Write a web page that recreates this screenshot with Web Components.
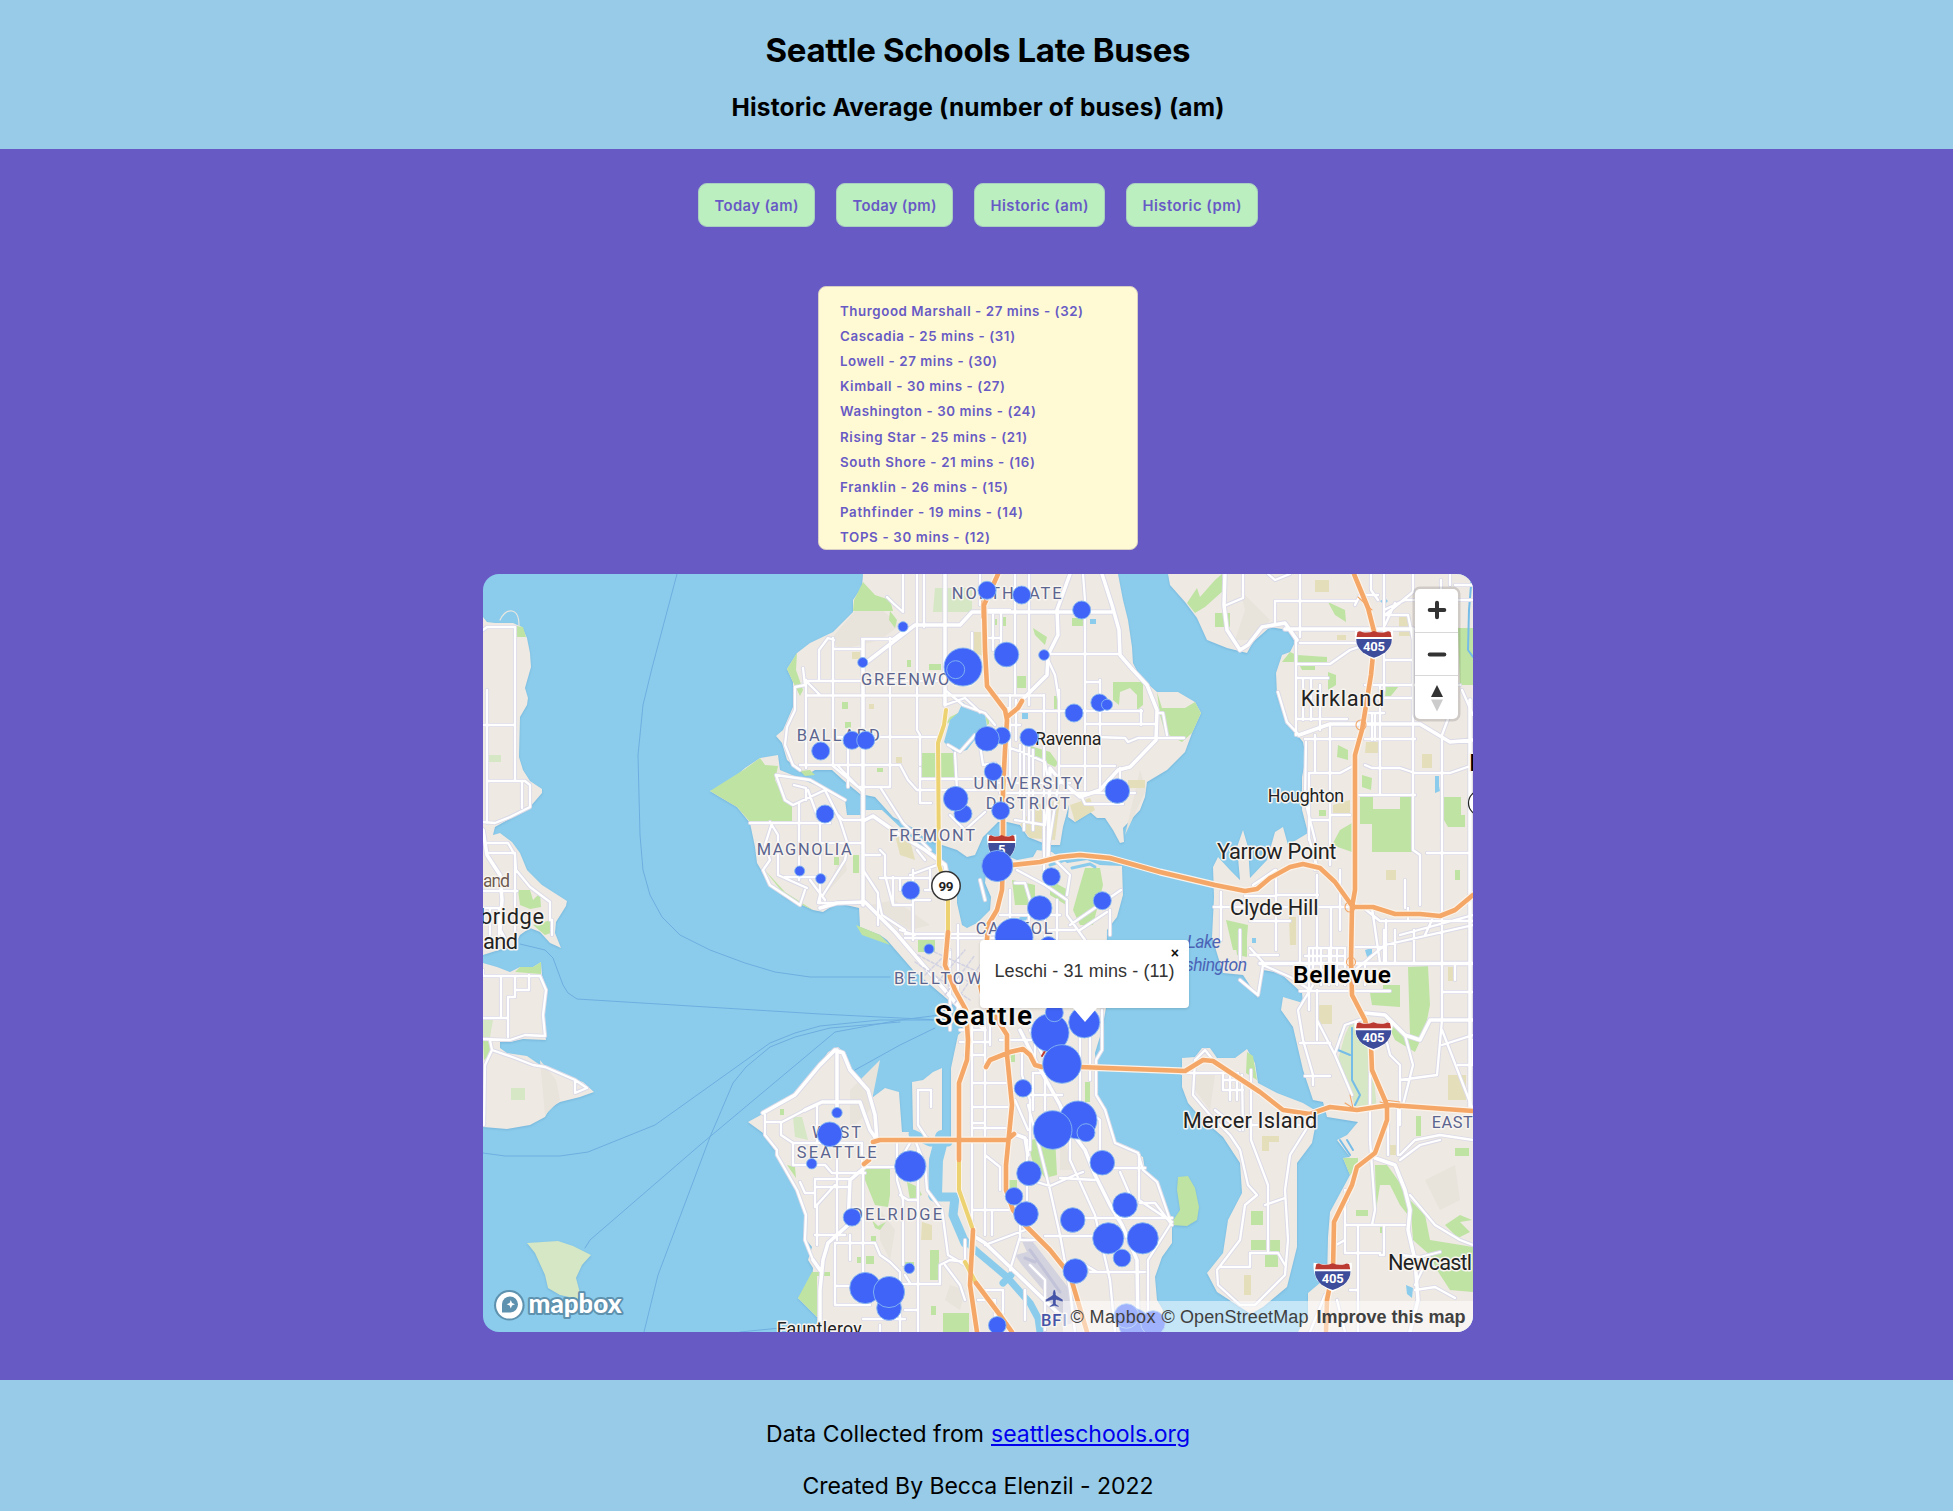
<!DOCTYPE html>
<html lang="en">
<head>
<meta charset="utf-8">
<title>Seattle Schools Late Buses</title>
<style>
body{margin:0;background:#685ac5;font-family:Inter,"Liberation Sans",sans-serif;color:#000}
</style>
</head>
<body>
<late-buses-app></late-buses-app>
<script>
const define=(name,html,init)=>{
  const t=document.createElement('template');t.innerHTML=html;
  customElements.define(name,class extends HTMLElement{
    constructor(){super();this.attachShadow({mode:'open'}).appendChild(t.content.cloneNode(true));}
    connectedCallback(){if(init)init.call(this,this.shadowRoot);}
  });
};

/* One line of text tracked out to the width given in its attribute. */
define('fit-line',`<style>:host{display:inline-block;white-space:nowrap}</style><span><slot></slot></span>`,function(r){
  const s=r.querySelector('span'),w=+this.getAttribute('width'),n=this.textContent.length;
  s.style.letterSpacing='0px';
  const ls=(w-s.getBoundingClientRect().width)/(n-1);
  s.style.letterSpacing=ls+'px';s.style.marginRight=-ls+'px';
});

define('page-header',`<style>
:host{display:flex;flex-direction:column;align-items:center;height:149px;background:#97cbe8;box-sizing:border-box;padding:30px 0 0 3px}
h1{margin:0;font:700 33px/40px Inter,sans-serif}h2{margin:22px 0 0;font:700 24.5px/30px Inter,sans-serif}
</style><h1><fit-line width="425">Seattle Schools Late Buses</fit-line></h1>
<h2><fit-line width="493">Historic Average (number of buses) (am)</fit-line></h2>`);

define('pill-button',`<style>
:host{display:block}
button{display:flex;align-items:center;justify-content:center;width:var(--w);height:44px;padding:2px 0 0;box-sizing:border-box;border:1px solid #a9cfc0;border-radius:9px;background:#bbefc0;color:#685ac5;font:600 14.8px/18px Inter,sans-serif}
</style><button><slot></slot></button>`);

define('view-switch',`<style>:host{display:flex;justify-content:center;gap:21px;padding-top:34px}</style>
<pill-button style="--w:117px"><fit-line width="84">Today (am)</fit-line></pill-button>
<pill-button style="--w:117px"><fit-line width="84">Today (pm)</fit-line></pill-button>
<pill-button style="--w:131px"><fit-line width="98">Historic (am)</fit-line></pill-button>
<pill-button style="--w:132px"><fit-line width="99">Historic (pm)</fit-line></pill-button>`);

define('school-list',`<style>
:host{display:block;width:320px;height:264px;margin:59px auto 0;box-sizing:border-box;padding:11.7px 0 0 21px;border:1px solid #d8cfc4;border-radius:8px;background:#fffad3;overflow:hidden;color:#685ac5;font:600 13.3px/25.2px Inter,sans-serif}
ul{margin:0;padding:0;list-style:none}li{height:25.2px}
</style><ul></ul>`,function(r){
  const rows=[['Thurgood Marshall - 27 mins - (32)',243],['Cascadia - 25 mins - (31)',175],['Lowell - 27 mins - (30)',157],['Kimball - 30 mins - (27)',165],['Washington - 30 mins - (24)',196],['Rising Star - 25 mins - (21)',187],['South Shore - 21 mins - (16)',195],['Franklin - 26 mins - (15)',168],['Pathfinder - 19 mins - (14)',183],['TOPS - 30 mins - (12)',150]];
  r.querySelector('ul').innerHTML=rows.map(([t,w])=>`<li><fit-line width="${w}">${t}</fit-line></li>`).join('');
});

define('map-canvas',`<style>
:host{display:block}svg{display:block}
.land{fill:#eee9e3}.water{fill:#8bccec}.g{fill:#bfe3a3}.lg{fill:#d5e7c4}.y{fill:#e4dfba}.sh{fill:#e4dfd6}
.lab{font-family:"Roboto","Open Sans",sans-serif;fill:#222;stroke:#f7f4f0;stroke-width:3;paint-order:stroke;stroke-linejoin:round}
.hood{fill:#5b648f;font-size:16.4px}.t{font-size:17.8px}.c{font-size:21.8px}.lake{fill:#4b64b6;stroke:none;font-style:italic;font-size:17.5px}
.dot circle{fill:#4064f7;stroke:#84b7f1;stroke-width:.9}
path{fill:none;stroke-linejoin:round;stroke-linecap:round}
path.land,path.water,path.g,path.lg,path.y,path.sh{stroke:none}
path.land{fill:#eee9e3}path.water{fill:#8bccec}path.g{fill:#bfe3a3}path.lg{fill:#d5e7c4}path.y{fill:#e4dfba}path.sh{fill:#e8e3db}
</style>
<svg width="990" height="758" viewBox="483 574 990 758">
<defs>
<path id="minor" d="M903,574V612L893,603L887,597M917,574V730L920,735V765M924,574V627M890,638V765M833,638V765M819,680V650L828,638L834,640M806,680V768M848,745V787M834,649H862M806,681H945M806,695.5H1043M834,737H940M800,765H900M862,639H893L905,630M803,668L805,685L795,687L795,710L787,727L785,745L793,765L800,770M806,681L820,695M900,765L908,780L917,790H1000M920,768V803H931M920,779H995M833,766L858,787H890V765M838,766L863,792M880,787L903,823L930,850M980,574V605M972,633V655L964,650M1015,574V695M1029,574V705M1001,610V660M993,615V650M1044,695V870M1059,690V770M1083,574L1085,600V790M1100,680V790M1085,682H1100M1141,710V725M1010,711H1142M1085,724H1157M1095,737L1125,738L1128,742L1138,738H1184M1048,654H1120M985,610H1010M985,638H1000M1048,660L1055,675L1059,700V780L1048,850M1060,766H1115M1120,768V780M1080,793H1135M1080,793L1085,804H1123M1020,745V800M1024,745V830M1029,745V820M1033,750V830M1010,695V780M1007,747L1022,752L1045,762L1050,790L1045,825L1015,820M955,753L957,790M980,745L983,765L995,763M950,790H1000M950,815L965,830L985,812M990,783H1070M1000,793H1080M945,690L963,705L985,713L995,725M945,705L965,698L980,712M1157,713H1163L1167,735M975,735L960,752L948,745M1005,725H1020M1008,708V745M1016,700V740M765,845L770,860L763,870L770,885L800,905L805,890M772,823L765,845M750,823H830M770,822L778,835V875L807,888M799,803V880M820,823V903M820,843H863M776,775L810,780L845,800M776,775L785,800L793,805L825,790L840,820L848,845L845,860L823,895M785,877H825M808,790L818,818L828,815M810,880L825,900M794,785L806,788V800M838,815L843,820H865M820,895L818,903L837,903M913,870V940M880,878H930M880,850L885,855V875L893,905H913M893,877V905M910,875L937,865M878,897L882,915L905,930M905,934H1000M905,938H1000M863,870L878,893V925M865,855H880M900,930L915,935M930,870V890M925,890H945M980,880L985,900M1015,883L1025,883L1030,900L1028,940M1017,870L1045,885L1067,900V915L1085,940M1055,860L1070,875L1067,895M1110,910V935M1070,925L1121,890M1010,890V940M1057,900V940M1080,930L1107,912M1045,905V940M1000,915H1060M1004,930H1075M917,850L925,860M913,900H930M900,878V890M950,950V1030M958,925V1010M1040,1020V1040M972,1020V1235M985,1020V1235M960,1042H990M965,1055H985M972,1083H1010M972,1107H1010M972,1123H985M972,1128H1008M972,1210H1010M985,1155L1000,1167V1190M1022,1050V1075L1030,1100V1150M1030,1030L1050,1070M1030,1095H1062M1035,1073H1060M1033,1073V1110M1045,1073V1110M1028,1105L1040,1150L1050,1190L1060,1235L1070,1290L1075,1332M1070,1130V1160L1095,1215L1110,1280L1115,1332M1030,1180L1050,1186L1075,1175L1083,1172M1060,1178L1095,1180M1110,1168H1145M1139,1155V1200L1172,1222L1148,1260V1332M1085,1218H1172M1102,1010V1050L1096,1060V1095L1105,1110L1115,1143L1138,1153L1143,1170L1157,1182L1170,1220M1045,1236H1115M1090,1272H1145M1080,1262L1097,1272M1080,1030V1105L1100,1120V1155M1090,1020V1080M1070,1110H1080M1027,1140V1200M1015,1100L1028,1130M1140,1203H1155L1172,1225M1120,1172L1130,1195M985,1245L1025,1230M1020,1237L1010,1270M992,1210V1235M1020,1215V1240L1040,1240M965,1265V1240M985,1290H1003V1313M978,1300H995V1332M1025,1290V1320M1030,1265L1045,1280V1330M960,1030H985M990,1020V1045M1000,1040H1035V1060M765,1115V1135L777,1150V1155L797,1190L806,1215L805,1240L813,1260L820,1270M767,1122H782L805,1110M781,1123V1135L793,1143H862V1165M817,1105V1143M793,1143V1165H825L832,1173H865M837,1150V1240M815,1179H850M815,1187H850M815,1180V1207L835,1185M800,1182L805,1193H815M815,1235H845M835,1243H875L880,1255L890,1262L900,1272V1332M863,1165V1300M918,1150V1310M897,1143V1180L903,1200V1265M835,1243V1305M915,1140L925,1165L927,1190L942,1210L948,1255L965,1265M835,1286H862M835,1305H870M900,1284H940V1265L950,1260L965,1262M863,1319H905M900,1195L908,1200H918M900,1160L910,1143M920,1090H931V1107M918,1090V1125L928,1140M817,1205V1245M850,1235V1260M863,1167H900M945,1265L960,1285L965,1300M905,1275L910,1283M905,1310H918V1332M880,1325V1332M1224,606L1243,598V574M1275,625V601H1355M1268,574L1275,580L1290,574M1300,574V637M1300,643H1360M1297,664H1330L1350,650L1365,645M1296,640V735M1296,678H1328M1303,678V720M1311,678V720M1320,685V700M1296,719H1347M1320,690V730M1278,692L1287,722L1299,735M1306,742L1305,800L1315,840V870M1309,838L1318,870M1315,735V773M1330,724V865M1309,840V773H1340L1355,765M1305,739H1355M1330,815H1350M1310,820H1330M1365,765L1372,768H1400L1415,773L1450,773L1473,765M1413,630V850L1420,855V905M1384,574V690M1384,615H1408L1413,640M1384,610L1405,600H1473M1413,574V592L1385,615M1385,625L1395,603M1365,685H1460M1365,698H1413M1380,685V740M1380,740V795M1365,739H1415M1358,795H1415M1442,735V990M1450,574V585M1441,580V600M1427,853H1470M1405,880V908M1462,690L1473,715M1360,905L1380,921H1473M1214,907H1350M1221,892V940M1276,870V950M1317,875V963M1331,908V963M1250,921H1290M1253,885L1275,870M1245,896H1275M1276,895H1318M1300,907V963M1386,920V963M1372,908L1380,963M1408,908V921M1340,870V930M1355,947H1386M1400,935L1473,915M1425,935L1432,920M1371,574V590L1378,600M1355,605L1360,595H1378M1375,713V740M1368,713H1384M1372,713V740M1384,660H1413M1473,585H1455M1455,685V700L1442,735M1240,980L1258,995L1263,965L1290,977L1310,990M1250,948L1263,962M1250,955H1278M1240,930V960M1309,948V1010M1313,948V985M1321,948V985M1329,948V985M1337,948V985M1345,948V985M1309,948H1345M1305,956H1345M1300,991H1390M1309,970H1345M1295,980H1345M1313,985L1298,1010L1303,1040L1313,1075V1085M1300,1043H1330M1305,1076H1330M1317,990V1040M1317,1020L1335,1055L1352,1095M1335,1053L1345,1025L1365,1018M1365,985V963M1395,930V963M1384,930V963M1414,930V963M1442,950V1020L1437,1075L1400,1080V1105M1442,1030L1473,1110M1385,1035L1390,1055L1400,1065V1125M1405,1035L1413,1065L1403,1105M1455,963V980M1442,992H1473M1355,970L1385,945L1473,925M1442,1045L1473,1035M1458,1065H1473V1040M1370,1055V1140L1375,1210L1372,1225M1388,1105V1155M1398,1105V1155M1400,1155L1415,1140L1440,1135L1473,1140M1400,1160L1420,1145L1440,1140M1410,1195L1435,1225L1460,1240L1473,1245M1345,1225H1405M1345,1200V1253H1380M1358,1225V1290H1350M1384,1225V1255L1380,1255M1400,1255L1420,1257L1440,1252M1415,1290L1435,1287L1455,1298M1336,1245L1345,1240M1340,1210L1348,1200L1345,1190M1310,1332L1325,1295M1345,1332L1337,1300M1358,1290V1332M1427,1260L1415,1285M1195,1060L1193,1095L1210,1115L1230,1135L1240,1150L1248,1185L1257,1195L1245,1205L1240,1240L1217,1270L1218,1285L1240,1305L1255,1305L1285,1275L1288,1240L1285,1190L1290,1155L1312,1120M1182,1073H1238M1242,1075L1243,1130M1251,1070V1140L1268,1185V1252M1220,1267H1250V1253H1278L1285,1265M1223,1075V1090H1243M1230,1075V1100M1237,1075V1100M1223,1080H1243M1265,1205L1285,1198M1195,1060L1205,1050L1217,1065M1223,1125H1310M1240,1130L1215,1110M483,630L487,627H515V780M487,690V823M483,725H515M487,781H525L530,785V807L510,817L495,823L483,822M522,781V808M487,843H508L515,855L516,870L530,887L550,902V920H552V935M487,853H515V945M483,891H517M483,970V976H540L546,990L543,1015L545,1036L525,1035L510,1040L483,1039M501,976V1018M483,1018H508M515,976V997H508V1037M529,975V990H515M490,1040L492,1050L515,1058L533,1065L545,1067L575,1080V1093L587,1088L575,1080M492,1050L485,1065L484,1125M483,908H500M490,908V935M499,908V935"/>
<path id="major" d="M945,574V705M863,640V905M863,665L915,625H960L972,612H1113M1070,574L1057,610L1058,635L1048,655L1047,675L1020,702M1102,574L1112,605L1119,630L1120,655L1133,670L1147,685L1157,710L1156,740L1130,767L1118,770L1100,790L1080,797L1060,780L1050,768L1048,860M865,820L873,816L900,835L925,850L945,865L950,890M820,908L837,903L865,902L895,932L960,1008L985,1030M1020,1030L1035,1060L1060,1105L1070,1130L1085,1150L1095,1175L1110,1205L1122,1225L1137,1260L1138,1332M985,1243L1060,1315M972,1235L985,1243M1014,1134L1025,1138L1028,1155M763,1113L795,1095L820,1065L835,1050L843,1053L850,1070L868,1090L875,1115L877,1140M837,1050V1115M805,1110L822,1102H860L870,1130L877,1140M865,1167L850,1180L848,1225L828,1243L823,1260L820,1290V1332M813,1260L820,1270M1225,574L1224,605L1227,630L1240,650L1248,645L1262,627L1285,623L1297,640M1285,629H1413M1299,735L1330,724H1420L1450,742L1473,740M1470,700V963M1260,963.5H1473M1470,963V1110M1365,1013L1385,1015L1405,1035L1420,1040L1430,1020H1473M1375,1158L1395,1165L1405,1190L1410,1210L1408,1230L1415,1260L1418,1300L1410,1332M483,830L487,855L500,875L502,900L500,930L508,945"/>
<path id="hwy" d="M998,574L990,592L984,605L985,650L987,686L1005,710L1007,720L1005,750L1003,790V860L1002,890L997,910L988,925L987,940M980,985L985,1005L993,1013L1007,1035V1055L1012,1105L1006,1165V1190L1013,1210L1025,1225L1050,1250L1070,1275L1087,1332M1007,717L1018,708L1022,701M1003,866L1040,862L1060,857L1080,855L1110,858L1160,872L1215,885L1245,891L1257,889L1270,878L1290,867L1303,864L1320,868L1335,882L1350,903L1353,907H1373L1395,914H1420L1440,916L1455,910L1473,895M1354,574L1368,608L1375,635L1371,675L1362,730L1355,755V890L1352,907L1351,960L1352,995L1365,1020L1371,1045L1372,1070L1387,1105V1120L1375,1153L1357,1167L1352,1185L1334,1222L1333,1270L1327,1300L1326,1332M986,1067L990,1060L1010,1052L1023,1049L1030,1055L1035,1065L1042,1067H1080L1185,1071L1203,1060L1213,1061L1260,1092L1283,1110L1310,1114L1330,1107L1357,1110L1390,1105L1473,1111M948,932L945,965L955,990L966,1010L968,1040L967,1060L959,1083V1160M973,1230L970,1285L977,1332M976,1283L1000,1315L1012,1332M864,1164L869,1160M873,1142L880,1140H1007L1014,1134"/>
<path id="yel" d="M946,710L944,725L938,743L939,865L948,895V930M959,1160V1190L972,1227M965,1262L976,1283"/>
<g id="shield"><path d="M-19,-14Q0,-10 19,-14Q20,-6 16,3Q10,11 0,15Q-10,11-16,3Q-20,-6-19,-14Z" style="fill:#fff"/><path d="M-16.5,-12.5Q-14,-14-12,-12.5Q-6,-11 0,-13.5Q6,-11 12,-12.5Q14,-14 16.5,-12.5L17.5,-7.5H-17.5Z" style="fill:#bb3a32"/><path d="M-17.8,-5.5H17.8Q18,2 11,8Q5,12 0,13.2Q-5,12-11,8Q-18,2-17.8,-5.5Z" style="fill:#3e4c9c"/></g>
</defs>
<rect x="483" y="574" width="990" height="758" class="water"/>
<g style="filter:drop-shadow(0 1px 1px rgba(80,140,190,.35))">
<path class="land" d="M483,617L487,622L495,623L513,623L522,627L527,638L530,653L531,667L525,688L528,698L527,705L520,717L519,757L523,770L530,781L542,789V793L530,807L513,817L495,827L493,835L500,833L512,842L520,853L527,870L542,885L567,901L566,906L556,922L555,933L561,948L550,943L540,932L530,928L520,935L515,945L483,955Z"/>
<path class="land" d="M483,963L497,967L510,972L520,967L533,967L541,962L542,975L547,990L543,1017L546,1040L523,1039L510,1042L500,1042V1048L507,1053L527,1056L543,1067L563,1076L583,1082L594,1092L580,1097L560,1102L550,1108L545,1117L530,1125L507,1129L483,1127Z"/>
<path class="lg" d="M527,1243L558,1241L573,1246L591,1255L582,1265L576,1278L580,1293L578,1299L560,1295L548,1288L545,1275L535,1253Z"/>
<path class="land" d="M863,574L862,587L853,600V612L833,632L810,643L797,653L787,669L793,682V707L783,730L776,736L782,743L787,760L800,771L807,775L815,770H832L843,780L860,794L875,797L893,817L913,828L927,840L957,850L967,857L975,855L983,837L998,822L1007,822L1020,825L1028,837L1048,845H1060L1063,827L1069,805L1068,817L1075,822L1090,812L1097,818H1105L1113,830L1120,843L1124,842L1123,828L1140,810L1145,797L1147,782L1167,770L1185,752L1192,733L1201,713L1195,702L1178,692H1157L1140,677L1133,663L1132,647L1128,620L1123,600L1118,574Z"/>
<path class="land" d="M710,791L728,783L745,768L760,758L778,755L780,770L797,777L820,787L845,800L847,815H865V810H882L900,827L920,845L940,857L948,870L957,890V903L962,925L967,928L977,923L990,910L991,897L985,883L987,863L993,850L1017,860L1033,857L1037,850L1052,852L1067,863L1087,860L1100,865L1122,866L1123,895L1117,917L1107,930L1106,1008L1102,1030L1095,1053L1097,1077L1095,1095L1103,1107L1115,1143L1127,1146L1135,1153L1143,1157L1145,1170L1157,1183L1172,1220V1243L1162,1257L1155,1277L1157,1300L1163,1310L1160,1332H818L817,1317L798,1298L812,1280L813,1268L808,1260L812,1247L804,1237L807,1213L795,1187L787,1173L777,1153L763,1133L748,1122L770,1110L795,1095L815,1072L828,1052L838,1047L845,1053L850,1068L868,1087L873,1097L885,1088L899,1092L902,1132H913L912,1082L923,1080L933,1072L942,1068V1137H951V1068L958,1035L963,1030L960,1010L940,993L913,970L887,940L880,935L860,927L859,908L837,903L823,912L813,910L787,898L767,880L757,863L755,847L750,823L737,807L720,797Z"/>
<path class="land" d="M1168,574L1170,585L1185,602L1197,618L1207,640L1227,648L1247,653L1253,642L1270,627L1288,630L1295,642L1290,652L1282,655L1276,673L1277,695L1287,723L1303,742L1306,757L1302,777V810L1308,833L1288,845L1283,827L1275,832L1267,860L1250,878L1248,847L1243,830L1237,847L1240,880L1230,870L1218,857L1213,867L1214,897L1212,937L1223,973L1243,975L1258,998L1263,970L1280,973L1302,993L1303,1003L1283,997L1281,1010L1293,1027L1303,1070L1313,1100L1323,1102L1327,1117L1358,1122L1347,1135L1337,1140L1350,1157L1343,1158L1350,1175L1330,1212L1328,1237L1327,1277L1308,1293V1313L1298,1332H1473V574Z"/>
<path class="land" d="M1182,1058L1195,1057L1202,1048H1210L1217,1058H1235L1247,1049L1255,1063L1258,1083L1277,1093L1303,1103L1318,1112L1312,1143L1297,1163V1247L1287,1287L1263,1307L1251,1314L1240,1307L1217,1292L1207,1273L1223,1253L1228,1220L1242,1193L1240,1163L1223,1137L1200,1117L1188,1103L1182,1087Z"/>
<path class="g" d="M1178,1177L1188,1176L1195,1188L1199,1207L1197,1220L1187,1226L1170,1225L1180,1210L1177,1190Z"/>
</g>
<path class="sh" d="M867,597L900,625L880,640L840,650L830,640ZM880,1060L850,1090L850,1130L870,1110ZM540,1060L556,1080L560,1100L545,1115ZM1240,590L1270,620L1255,640L1235,640L1245,610ZM870,905L895,900L930,925L910,930ZM950,1285L965,1290L960,1310L945,1300ZM1195,1070L1215,1075L1210,1110L1195,1090ZM1425,1180L1455,1165L1460,1200L1440,1210ZM1140,770L1146,790L1125,835ZM880,1210L895,1230L890,1260L880,1240ZM843,850L847,870L825,895ZM1060,1130L1075,1170L1060,1170Z"/>
<path class="g" d="M710,791L745,769L760,758L765,765L778,766L775,780L785,800L792,805V821L750,822L737,807L720,797ZM863,582L875,595L890,600L893,611H853L854,600ZM890,611L897,620L895,628L889,620ZM797,653L787,669L793,682L800,696L803,690L796,670ZM922,753H956L957,778H921ZM1157,692L1162,708H1185L1195,702L1201,713L1192,733L1182,742L1165,733L1160,715ZM1113,682H1143V705L1137,710V695L1130,688L1120,692L1119,705L1113,700ZM1085,868L1100,868L1103,885L1093,925H1080L1073,910L1080,885ZM1050,880L1068,890L1066,905L1050,895ZM1027,745L1050,752L1058,763L1055,767L1030,755ZM1360,797H1373V809H1400V797H1413L1412,852H1372V824H1360ZM1444,797H1461V815H1465V827H1448L1444,820ZM1458,628H1473V685H1460ZM1282,662L1290,652L1297,655L1327,657V662ZM1300,666H1315V670H1302ZM1328,602L1345,610L1346,622L1335,615ZM1215,613H1230V627H1215ZM1187,603L1197,588L1200,597L1215,580L1222,574L1224,590L1205,607L1195,613ZM1408,967L1428,966L1430,1005L1425,1030L1415,1052L1395,1040L1388,1025L1410,1035ZM1383,985H1400V1007L1372,1005L1370,993L1383,992ZM1234,930H1247V957L1237,955ZM1226,920L1248,925L1246,950H1233ZM1410,1200L1425,1215L1430,1240L1473,1247V1292L1450,1290L1437,1270L1430,1255L1413,1240ZM1375,1165L1387,1165L1405,1190L1408,1215L1400,1205L1390,1185L1380,1185L1376,1210ZM1343,1158H1358V1168L1350,1175ZM1251,1211H1263V1225H1251ZM1251,1240H1280V1252H1268V1250H1251ZM1265,1255H1278V1267H1265ZM1247,1052L1253,1056L1257,1080L1246,1073ZM865,1168H890V1195L888,1207L875,1205L865,1180ZM907,1182L918,1187L922,1195L910,1200ZM812,1272H817V1317L798,1298ZM930,1250H939V1280H930ZM943,1313H969V1332H943ZM787,1165L795,1167L796,1178ZM1028,1140L1055,1137L1057,1175L1045,1178L1032,1160ZM517,626L523,627L526,637H517ZM518,890H530L533,900L540,893L541,907L530,909L520,905ZM533,925L551,920V933L545,935ZM520,967L533,967L541,962V974L515,972ZM483,1040L490,1040V1055L484,1060ZM842,702h6v7h-6ZM907,660h4v7h-4ZM929,664h12v6h-12ZM845,722h6v6h-6ZM877,768h6v4h-6ZM1017,676h9v12h-9ZM1072,618h12v8h-12ZM1054,696h7v14h-7ZM1338,745L1348,750V760L1337,757ZM1362,775L1372,778L1371,790L1362,787ZM1328,672L1336,675V685L1328,690ZM1319,810h7v6h-7ZM1340,830L1352,823V852L1332,845ZM1455,870h5v10h-5ZM1386,687L1399,686L1390,697H1385ZM1455,1148h14v8h-14ZM1416,1116h5v20h-5ZM853,855h6v18h-6ZM834,857h5v8h-5ZM918,937h17v15h-17ZM1012,880L1035,885V905H1015ZM856,925L880,935L905,960L890,945L862,935ZM763,868L787,898L813,910L785,892ZM1009,1180h8v15h-8ZM1085,1082h5v20h-5ZM872,1220L878,1226L886,1222L880,1230L875,1228ZM871,1236h5v7h-5ZM857,1257h5v6h-5ZM866,1256h8v8h-8ZM902,1262h12v5h-12ZM812,1272h18v4h-18ZM931,1306h5v9h-5ZM1008,1050h7v12h-7ZM780,1109h4v6h-4ZM1000,617h6v9h-6ZM993,619h4v6h-4ZM1033,628L1047,637L1045,645L1035,635ZM960,712L950,717L945,725L950,722ZM985,714l4,0v10l-2,1ZM800,771L810,770L815,775L805,776ZM1356,1210h12v6h-12ZM1380,1227h5v6h-5ZM1445,1225L1460,1215L1472,1220L1460,1222L1470,1232L1458,1238Z"/>
<path class="lg" d="M1352,1020L1370,1035L1373,1070L1377,1110H1355L1352,1095L1338,1060L1345,1035ZM793,1117H802L808,1140L795,1137ZM511,1088H525V1100H511ZM483,1020H493L490,1037H483ZM489,755H501V762H489ZM935,588H972V612H933Z"/>
<path class="y" d="M973,632L985,632V657L973,652ZM1035,805L1060,800L1055,840L1030,838L1020,825ZM1070,805L1090,798L1095,810L1075,822ZM1315,580H1329V592H1315ZM1399,617H1411V636H1399ZM1366,742H1378V753H1365ZM1422,754H1432V768H1422ZM1319,1005H1332V1024H1319ZM1448,1075H1466V1100H1448ZM1262,1136H1279V1142H1269V1151H1262ZM895,835L910,840L915,860L900,855ZM1289,917H1296V945H1290ZM1333,805L1350,800V815H1333ZM1244,1275H1251V1295H1244ZM1390,1145H1398V1155H1390ZM1128,780H1145V788H1128ZM1337,635h9v5h-9ZM1386,870h10v10h-10ZM852,652h8v7h-8ZM896,757h6v6h-6ZM869,704h5v5h-5ZM922,1222L932,1225V1240H921ZM1448,967h9v14h-9Z"/>
<path class="water" d="M963,702L972,710L985,714L987,727L977,737L967,750L955,753L944,742L950,720L958,713ZM1022,711h6v8h-6ZM1090,619h6v5h-6ZM1380,601l5,-3l3,3l-4,4ZM1020,915l8,0l-2,6h-7ZM1365,950l7,-2v6l-5,3ZM1406,1285l7,3l-1,10l-5,-4ZM1435,776h4v10l1,5l-5,2ZM1252,938h4v5h-4Z"/>
<path d="M1050,865L1065,860M1072,868L1090,864L1095,867" stroke="#8bccec" stroke-width="3"/>
<path d="M1472,574L1469,610L1468,650L1473,657M1345,1027L1340,1035L1338,1050L1350,1055M1352,1028V1080L1360,1095L1355,1105M1340,1140L1350,1155M1347,1140L1353,1150" stroke="#75bce8" stroke-width="2"/>
<path d="M942,1137L936,1160L935,1195" stroke="#8bccec" stroke-width="14"/><path d="M913,1134L930,1142H948M937,1197L955,1197L953,1215L965,1243" stroke="#8bccec" stroke-width="9"/>
<path d="M965,1240L975,1250L1007,1277L1030,1303L1038,1318L1040,1332M1003,1283L1011,1275" stroke="#8bccec" stroke-width="7"/>
<path d="M1020,1237L1030,1238L1070,1290L1085,1320L1065,1325L1043,1290L1022,1265L1015,1255L1027,1252Z" style="fill:#d3d2df"/>
<path d="M1030,1250L1060,1292M1025,1258L1035,1262" stroke="#c2c2d8" stroke-width="3"/>
<path d="M500,620Q505,610 512,611T519,626" stroke="#e8e6df" stroke-width="1.2"/>
<path d="M677,574L652,668L643,705L638,755L640,835L643,870L650,895L662,917L680,935L710,950L745,963L775,972L810,977H890M520,944L545,950L553,958L563,985L568,993L577,999L820,1014L940,1020M483,1153L505,1156H560L588,1152L655,1125L770,1043L795,1033L820,1026L880,1020H940M644,1332L658,1275L710,1137L733,1083L746,1067L770,1047L795,1037L830,1028L900,1022M585,1248L590,1240L700,1145L835,1032L900,1020L940,1015M855,1070L900,1045L935,1028M740,1332L780,1328" stroke="#6daee0" stroke-width="1"/>
<use href="#minor" stroke="#dbdae7" stroke-width="4.2"/><use href="#major" stroke="#dbdae7" stroke-width="5.4"/>
<use href="#minor" stroke="#fff" stroke-width="2.3"/><use href="#major" stroke="#fff" stroke-width="3.5"/>
<path d="M918,955L975,985M915,962L970,1000M930,950L985,975M925,975L950,950M935,985L965,950M945,995L975,955M955,1003L980,965" stroke="#d2d2e3" stroke-width="1.5" stroke-dasharray="3 2"/>
<use href="#hwy" stroke="#fbf3ea" stroke-width="7"/><use href="#yel" stroke="#fbf3ea" stroke-width="6"/>
<use href="#yel" stroke="#edd272" stroke-width="4"/><use href="#hwy" stroke="#f4a767" stroke-width="4.6"/>
<g stroke="#f4a767" stroke-width="1.1"><circle cx="1361" cy="725" r="5" fill="none"/><circle cx="1350" cy="907" r="5" fill="none"/><circle cx="1351" cy="962" r="4.5" fill="none"/><path d="M1358,597L1372,610M1380,1102L1400,1108M1350,1095L1353,1108L1345,1103M1385,1100L1400,1102M982,600V618"/></g>
<g class="lab hood">
<text x="951.7" y="599" textLength="110">NORTHGATE</text><text x="861" y="685" textLength="114">GREENWOOD</text><text x="796.7" y="740.7" textLength="83">BALLARD</text><text x="756.7" y="855" textLength="95">MAGNOLIA</text><text x="889" y="840.7" textLength="86">FREMONT</text><text x="973.5" y="789.2" textLength="109">UNIVERSITY</text><text x="985.7" y="809" textLength="84">DISTRICT</text><text x="975.7" y="933.5" textLength="77">CAPITOL</text><text x="894" y="984.3" textLength="102">BELLTOWN</text><text x="812" y="1137.5" textLength="49">WEST</text><text x="796.7" y="1157.7" textLength="80">SEATTLE</text><text x="852" y="1219.7" textLength="90">DELRIDGE</text><text x="1431.7" y="1127.7" textLength="41">EAST</text></g>
<g class="lab lake"><text x="1186.7" y="947.7" textLength="34">Lake</text><text x="1162" y="971" textLength="85">Washington</text></g>
<g class="lab t"><text x="1035" y="744.5" textLength="66.5">Ravenna</text><text x="1267.7" y="801.7" textLength="76.5">Houghton</text><text x="776.7" y="1335" textLength="85">Fauntleroy</text><text x="483" y="887" textLength="27" style="fill:#6e5a50">and</text></g>
<g class="lab c"><text x="1300.7" y="706" textLength="83.5">Kirkland</text><text x="1217" y="859" textLength="119.5">Yarrow Point</text><text x="1230" y="915" textLength="88.5">Clyde Hill</text><text x="1182.7" y="1127.7" textLength="134.5">Mercer Island</text><text x="1388" y="1270" textLength="84">Newcastl</text><text x="480" y="923.5" textLength="64">bridge</text><text x="483" y="949" textLength="35">and</text>
<text x="1293" y="982.8" textLength="98" style="font-size:24.5px;font-weight:600;fill:#000;stroke-width:4">Bellevue</text><text x="935" y="1025" textLength="97" style="font-size:28px;font-weight:600;fill:#000;stroke-width:4">Seattle</text><text x="1469.5" y="770.5" style="font-size:24px;font-weight:700;fill:#000">R</text></g>
<circle cx="1481" cy="803" r="12.5" fill="#fff" stroke="#222" stroke-width="1.2"/>
<g class="lab" style="fill:#4654a8;font-weight:500;font-size:16.5px"><text x="1041" y="1326" textLength="26">BFI</text></g>
<path d="M1054.3,1289C1056,1291 1056,1293 1056,1295L1063,1299.5V1302L1056,1300V1304L1059,1306V1307.3L1054.3,1306L1049.6,1307.3V1306L1052.6,1304V1300L1045.6,1302V1299.5L1052.6,1295C1052.6,1293 1052.6,1291 1054.3,1289Z" style="fill:#4654a8" stroke="#f5f2ef" stroke-width=".5"/>
<use href="#shield" x="1374" y="644.5"/><use href="#shield" x="1373.5" y="1035.8"/><use href="#shield" x="1332.7" y="1276.8"/><use href="#shield" transform="translate(1001.7 848.5) scale(.76 1)"/>
<g font-family="Roboto,sans-serif" font-weight="700" font-size="13" fill="#fff" text-anchor="middle"><text x="1374" y="651" textLength="22">405</text><text x="1373.5" y="1042" textLength="22">405</text><text x="1332.7" y="1283" textLength="22">405</text><text x="1001.7" y="854">5</text></g>
<circle cx="946" cy="885.7" r="14.2" fill="#fff" stroke="#333" stroke-width="1.5"/><text x="946" y="890.5" text-anchor="middle" textLength="15" font-family="Roboto,sans-serif" font-weight="700" font-size="13.5" fill="#222">99</text>
<path d="M1042,1056L1045,1051" stroke="#bb3a32" stroke-width="2"/>
<g class="dot"></g>
<g font-family="Lato,sans-serif"><circle cx="509.3" cy="1305.3" r="15.3" fill="#5f92ae"/><circle cx="509.3" cy="1305.3" r="13.2" fill="#fff"/><path d="M502,1312.5V1304A8,8 0 1 1 510.5,1312.5Z" style="fill:#5f92ae"/><path d="M510.8,1300L512,1303L515,1304.3L512,1305.5L510.8,1308.5L509.6,1305.5L506.6,1304.3L509.6,1303Z" style="fill:#fff"/>
<text x="528.5" y="1312.7" textLength="93" font-size="26" font-weight="900" fill="#fff" stroke="#5f92ae" stroke-width="4" paint-order="stroke" stroke-linejoin="round">mapbox</text></g>
</svg>`,function(r){
  const stops=[[987,590.3,9],[1021.7,595,9],[1081.7,610,9],[903,626.7,5],[862.7,662.5,5],[963,667,19],[955.7,669.7,9],[1006.5,654.5,12.3],[1044,655,5.3],[1074,713,9],[1099.5,702.7,8.7],[1107,704.7,5.5],[820.7,751,9],[852,740.3,9],[865.7,740.3,9],[1002,735.7,8.5],[987,738.7,12.3],[1029,737.3,9],[993.3,771.7,9],[1117.3,791,12.3],[825,814,9],[963,813.7,9],[955.7,798.7,12.3],[1000.7,810.7,9],[799.7,871,5],[820.7,878.7,5],[910.7,890.3,9],[997.3,866,15.6],[1051.3,876.7,9],[1102.3,900.7,9],[1039.7,908,12.3],[1014,937.3,19],[1048.5,945.5,9],[929,949,5],[1084.3,1022.3,15.6],[1050,1032.7,19],[1054.3,1012.7,9],[1062,1064,19.3],[1023,1088.3,8.7],[1078,1120,19],[1052.7,1130,19.3],[1086,1132.7,9],[1102.3,1162.7,12.3],[1029,1173.3,12.3],[1014,1196.3,8.8],[1026,1214,12.3],[1125,1205,12.3],[1072.7,1220,12.3],[1108.3,1238.3,15.6],[1142.7,1238.3,15.6],[1122,1258,8.8],[1075.3,1271,12.3],[997.3,1325.3,8.8],[1134,1324,15.5],[1126.5,1316,12.3],[1153,1323,12.3],[837,1112.7,5.2],[829.7,1134.3,12.3],[811.7,1163.7,5.2],[910.3,1166.3,15.6],[852,1217.3,8.8],[909.3,1268.3,5.2],[865.3,1288,15.6],[889,1308,12.3],[889,1292,15.6]];
  r.querySelector('.dot').innerHTML=stops.map(([x,y,s])=>`<circle cx="${x}" cy="${y}" r="${s}"/>`).join('');
});

define('map-popup',`<style>
:host{position:absolute;left:497px;top:366px;width:209px;height:68px;box-sizing:border-box;background:#fff;border-radius:4px;box-shadow:0 1px 3px rgba(0,0,0,.15);color:#333;font:18px/20px "Liberation Sans",sans-serif;padding:21px 0 0 14.5px}
i{position:absolute;left:93px;top:68px;border:12px solid transparent;border-top-color:#fff;border-top-width:14px;border-bottom:0}
b{position:absolute;right:10px;top:7px;font:700 14px/12px "Liberation Sans",sans-serif;color:#111}
</style><fit-line width="180">Leschi - 31 mins - (11)</fit-line><b>×</b><i></i>`);

define('map-controls',`<style>
:host{position:absolute;left:932px;top:15px;width:43px;height:130px;background:#fff;border-radius:5px;box-shadow:0 0 0 2.5px rgba(0,0,0,.13);display:flex;flex-direction:column}
div{flex:1;display:flex;align-items:center;justify-content:center}div+div{border-top:1px solid #d8d8d8}
</style><div><svg width="20" height="20"><path d="M10,2.7V17.3M2.7,10H17.3" stroke="#333" stroke-width="4" stroke-linecap="round"/></svg></div>
<div><svg width="20" height="20"><path d="M2.7,10.5H17.3" stroke="#333" stroke-width="4" stroke-linecap="round"/></svg></div>
<div><svg width="20" height="28"><path d="M10,1L16,13H4Z" fill="#333"/><path d="M10,27.5L16,15.5H4Z" fill="#ccc"/></svg></div>`);

define('map-attribution',`<style>
:host{position:absolute;right:0;bottom:0;width:410px;height:31px;box-sizing:border-box;background:rgba(255,255,255,.5);display:flex;justify-content:flex-end;gap:6px;padding-right:7.5px;color:#404040;font:18px/32px "Liberation Sans",sans-serif}
b{margin-left:2px}
</style><fit-line width="85">© Mapbox</fit-line><fit-line width="147">© OpenStreetMap</fit-line><b><fit-line width="149">Improve this map</fit-line></b>`);

define('bus-map',`<style>:host{display:block;position:relative;width:990px;height:758px;margin:24px auto 0;border-radius:16px;overflow:hidden}</style>
<map-canvas></map-canvas><map-popup></map-popup><map-controls></map-controls><map-attribution></map-attribution>`);

define('page-footer',`<style>
:host{display:flex;flex-direction:column;align-items:center;gap:22px;height:131px;box-sizing:border-box;padding:39px 0 0 3px;background:#97cbe8;font:23px/30px Inter,sans-serif}
p{margin:0;display:flex;gap:7px}a{color:#0000ee}
a fit-line{text-decoration:underline;text-decoration-thickness:2px;text-underline-offset:2px}
</style><p><fit-line width="218">Data Collected from</fit-line><a href="#"><fit-line width="199">seattleschools.org</fit-line></a></p>
<p><fit-line width="351">Created By Becca Elenzil - 2022</fit-line></p>`);

define('late-buses-app',`<style>:host{display:flex;flex-direction:column;height:1511px;overflow:hidden}main{height:1231px;box-sizing:border-box;padding-left:3px;display:flex;flex-direction:column}</style>
<page-header></page-header><main><view-switch></view-switch><school-list></school-list><bus-map></bus-map></main><page-footer></page-footer>`);
</script>
</body>
</html>
